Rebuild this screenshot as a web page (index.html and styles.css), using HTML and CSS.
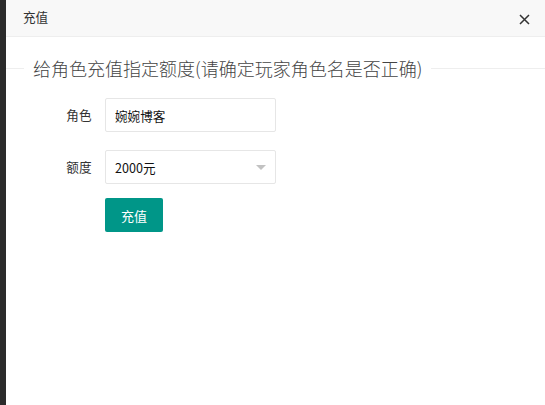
FILE: index.html
```html
<!DOCTYPE html>
<html lang="zh-CN">
<head>
<meta charset="utf-8">
<title>充值</title>
<link rel="stylesheet" href="styles.css">
</head>
<body>
<div class="page">
  <div class="backdrop"></div>
  <div class="layer">
    <div class="layer-title">
      <span class="title-text">充值</span>
      <span class="close" aria-label="关闭">
        <svg width="11" height="11" viewBox="0 0 11 11"><path d="M1 1 L10 10 M10 1 L1 10" stroke="#333" stroke-width="1.5" fill="none"/></svg>
      </span>
    </div>
    <div class="field-title">
      <span class="line-left"></span>
      <span class="legend">给角色充值指定额度(请确定玩家角色名是否正确)</span>
      <span class="line-right"></span>
    </div>
    <form class="form">
      <div class="form-item">
        <label class="form-label">角色</label>
        <div class="input-block"><input class="input" type="text" value="婉婉博客"></div>
      </div>
      <div class="form-item item-select">
        <label class="form-label">额度</label>
        <div class="input-block">
          <div class="select">
            <span class="select-text">2000元</span>
            <span class="arrow"></span>
          </div>
        </div>
      </div>
      <div class="form-item item-btn">
        <div class="input-block"><button class="btn" type="button">充值</button></div>
      </div>
    </form>
  </div>
</div>
</body>
</html>
```
FILE: styles.css
```css
* { box-sizing: border-box; }
html, body { margin: 0; padding: 0; height: 100%; }
body {
  font-family: "Microsoft YaHei", "Noto Sans CJK SC", "Liberation Sans", sans-serif;
  font-size: 12.6px;
  color: #333;
}
.page { display: flex; height: 405px; overflow: hidden; }
.backdrop { width: 6px; flex: none; background: #2b2b2b; }
.layer { flex: 1; background: #fff; }
.layer-title {
  height: 37px;
  background: #f8f8f8;
  border-bottom: 1px solid #eee;
  display: flex;
  align-items: center;
  justify-content: space-between;
  padding: 0 15px 0 17px;
}
.title-text { font-size: 12.6px; color: #333; line-height: 1; margin-top: -1px; }
.close { display: flex; width: 11px; height: 11px; margin-top: 2px; }
.field-title {
  display: flex;
  align-items: center;
  height: 24px;
  margin: 19px 0 18px;
}
.line-left { width: 18px; height: 1px; background: #eee; }
.line-right { flex: 1; height: 1px; background: #eee; }
.legend {
  padding: 0 9px;
  font-size: 18px;
  font-weight: 300;
  color: #444;
  line-height: 24px;
  white-space: nowrap;
}
.form { margin: 0; }
.form-item { display: flex; align-items: center; height: 34px; margin-bottom: 18px; }
.item-select { margin-bottom: 14px; }
.form-label {
  width: 99px;
  padding: 0 13.5px;
  text-align: right;
  line-height: 18px;
  color: #333;
  flex: none;
}
.item-btn .input-block { margin-left: 99px; }
.input-block { width: 171px; }
.input, .select {
  display: flex;
  align-items: center;
  width: 171px;
  height: 34px;
  border: 1px solid #e6e6e6;
  border-radius: 2px;
  padding: 0 9px;
  font: inherit;
  color: #111;
  background: #fff;
  outline: none;
}
.select { position: relative; }
.select-text { color: #111; }
.arrow {
  position: absolute;
  right: 9px;
  top: 50%;
  margin-top: -2px;
  width: 0; height: 0;
  border-left: 5.5px solid transparent;
  border-right: 5.5px solid transparent;
  border-top: 5.5px solid #c2c2c2;
}
.btn {
  height: 34px;
  padding: 0 16px;
  border: none;
  border-radius: 2px;
  background: #009688;
  color: #fff;
  font: inherit;
  font-size: 13px;
  cursor: pointer;
}
```
